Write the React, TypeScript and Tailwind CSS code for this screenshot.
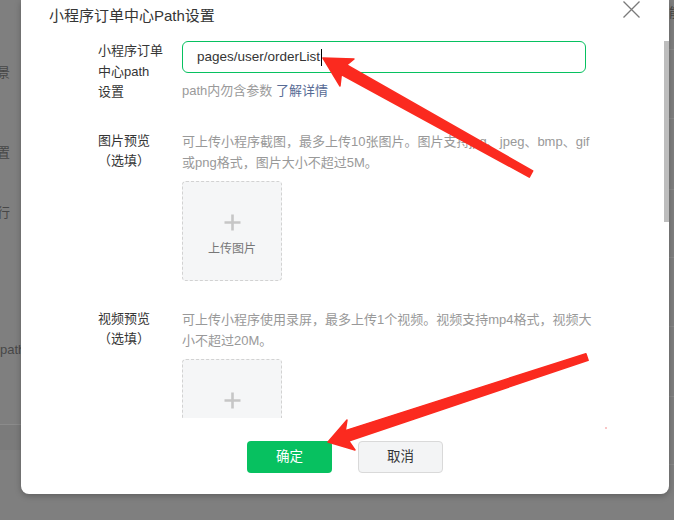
const font = "font-['Liberation_Sans','Noto_Sans_CJK_SC',sans-serif]";

function UploadBox({ label }: { label: string }) {
  return (
    <div className="mt-[8px] flex h-[100px] w-[100px] flex-col items-center rounded-[4px] border border-dashed border-[#d2d2d2] bg-[#f5f6f7] pt-[32px]">
      <svg width="17" height="17" viewBox="0 0 17 17">
        <path d="M8.5 0.5v16M0.5 8.5h16" stroke="#c6c6c6" strokeWidth="2.6" />
      </svg>
      <span className="mt-[9px] text-[12px] leading-[18px] text-[#777]">{label}</span>
    </div>
  );
}

export default function App() {
  return (
    <div className={`relative h-[520px] w-[674px] overflow-hidden bg-[#7f7f7f] ${font}`}>

      {/* page behind the mask */}

      <div className="flex h-full text-[13px] leading-5 text-[#474747]">

        <div className="flex w-[21px] flex-col">
          <div className="mt-[63px] flex w-[10px] justify-end overflow-hidden">
            <span className="whitespace-nowrap">使用场景</span>
          </div>
          <div className="mt-[60px] flex w-[10px] justify-end overflow-hidden">
            <span className="whitespace-nowrap">设置</span>
          </div>
          <div className="mt-[40px] flex w-[10px] justify-end overflow-hidden">
            <span className="whitespace-nowrap">执行</span>
          </div>
          <div className="mt-[117px] whitespace-nowrap">path</div>
          <div className="mt-[64px] h-[26px] border-t border-[#8b8b8b] bg-[#7b7b7b]" />
        </div>

        <div className="flex-1" />

        <div className="flex w-[5px] flex-col overflow-hidden">
          <div className="mt-[3px] whitespace-nowrap">能</div>
          <div className="mt-[26px] border-t border-[#898989]" />
          <div className="mt-[68px] border-t border-[#898989]" />
          <div className="mt-[70px] border-t border-[#898989]" />
          <div className="mt-[67px] border-t border-[#898989]" />
          <div className="mt-[68px] border-t border-[#898989]" />
          <div className="mt-[69px] border-t border-[#898989]" />
          <div className="mt-[67px] border-t border-[#898989]" />
        </div>

      </div>

      {/* Dialog */}

      <div className="absolute left-[21px] top-0 flex h-[494px] w-[648px] flex-col rounded-b-[8px] bg-white shadow-[0_2px_6px_rgba(0,0,0,0.25)]">

        <div className="flex h-[41px] items-start">
          <h1 className="ml-[28px] mt-[6px] text-[15px] leading-5 text-[#353535]">
            小程序订单中心Path设置
          </h1>
          <svg width="17" height="17" viewBox="0 0 17 17" className="ml-auto mr-[29px] mt-[1px]">
            <path d="M0.5 0.5l16 16M16.5 0.5l-16 16" stroke="#7a7a7a" strokeWidth="1.3" />
          </svg>
        </div>

        <div className="flex h-[377px]">

          <div className="flex-1 overflow-hidden pl-[77px] text-[13px]">

            {/* path */}

            <div className="flex">
              <div className="w-[84px] leading-[20.5px] text-[#353535]">
                <p>小程序订单</p>
                <p>中心path</p>
                <p>设置</p>
              </div>
              <div className="w-[404px]">
                <div className="flex h-[32px] items-center rounded-[6px] border border-[#07c160] pl-[14px] text-[13.5px] text-[#353535]">
                  pages/user/orderList
                  <span className="ml-[1px] h-[17px] w-px bg-black" />
                </div>
                <p className="mt-[8px] leading-5 text-[#9a9a9a]">
                  path内勿含参数 <span className="text-[#576b95]">了解详情</span>
                </p>
              </div>
            </div>

            {/* images */}

            <div className="mt-[28px] flex">
              <div className="w-[84px] leading-[20.5px] text-[#353535]">
                <p>图片预览</p>
                <p>（选填）</p>
              </div>
              <div>
                <div className="whitespace-nowrap leading-[21px] text-[#999]">
                  <p>可上传小程序截图，最多上传10张图片。图片支持jpg、jpeg、bmp、gif</p>
                  <p>或png格式，图片大小不超过5M。</p>
                </div>
                <UploadBox label="上传图片" />
              </div>
            </div>

            {/* video */}

            <div className="mt-[28px] flex">
              <div className="w-[84px] leading-[20.5px] text-[#353535]">
                <p>视频预览</p>
                <p>（选填）</p>
              </div>
              <div>
                <div className="whitespace-nowrap leading-[21px] text-[#999]">
                  <p>可上传小程序使用录屏，最多上传1个视频。视频支持mp4格式，视频大</p>
                  <p>小不超过20M。</p>
                </div>
                <div className="mt-[1px]">
                  <UploadBox label="上传视频" />
                </div>
              </div>
            </div>

          </div>

          <div className="w-[5px]">
            <div className="h-[181px] bg-[#bdbdbd]" />
          </div>

        </div>

        <div className="flex justify-center gap-[26px] pt-[23px] text-[13.5px]">
          <button className="h-[32px] w-[85px] rounded-[4px] bg-[#07c160] text-white">
            确定
          </button>
          <button className="h-[32px] w-[85px] rounded-[4px] border border-[#d9d9d9] bg-[#f3f4f5] text-[#353535]">
            取消
          </button>
        </div>

      </div>

      {/* annotation arrows */}

      <svg className="absolute left-0 top-0" width="674" height="520" viewBox="0 0 674 520">
        <polygon
          points="323,58 354,59 346.7,64.9 532.7,170.9 529.3,177.1 341.3,74.5 340,86"
          fill="#fb2a1f"
          stroke="#fb2a1f"
          strokeWidth="1.5"
          strokeLinejoin="round"
        />
        <polygon
          points="328,442 347,420 345.3,430.6 585.9,353.7 588.1,360.3 348.7,441 355,450"
          fill="#fb2a1f"
          stroke="#fb2a1f"
          strokeWidth="1.5"
          strokeLinejoin="round"
        />
        <circle cx="606" cy="428" r="1" fill="#f7b3b3" />
      </svg>

    </div>
  );
}
